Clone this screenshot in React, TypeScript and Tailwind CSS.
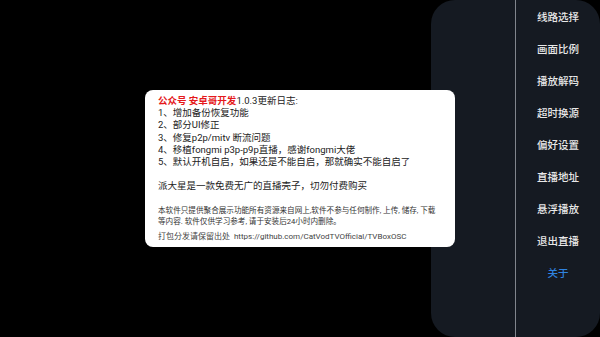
import React from "react";

const menu = ["线路选择", "画面比例", "播放解码", "超时换源", "偏好设置", "直播地址", "悬浮播放", "退出直播", "关于"];

const changes = [
  "1、增加备份恢复功能",
  "2、部分UI修正",
  "3、修复p2p/mitv 断流问题",
  "4、移植fongmi p3p-p9p直播，感谢fongmi大佬",
  "5、默认开机自启，如果还是不能自启，那就确实不能自启了",
];

export default function App() {
  return (
    <div
      className="relative w-[600px] h-[337px] bg-black overflow-hidden flex justify-end"
      style={{ fontFamily: 'Roboto, "Noto Sans CJK SC", sans-serif' }}
    >
      <div className="w-[169px] h-full bg-[#151a22] rounded-[24px] flex">
        <div className="w-[85px] h-full border-r border-[#80858d]" />
        <div className="flex-1 flex flex-col pt-[2px]">
          {menu.map((m) => (
            <div
              key={m}
              className={`h-8 flex items-center justify-center text-[10.5px] font-medium ${
                m === "关于" ? "text-[#2f83e0]" : "text-[#e8e8e8]"
              }`}
            >
              {m}
            </div>
          ))}
        </div>
      </div>

      <div className="absolute left-[145px] top-[90px] w-[310px] h-[157px] bg-white rounded-[8px] px-[13px] pt-[5px] text-[#222]">
        <div className="text-[9.5px] leading-[12.2px]">
          <p>
            <span className="text-[#e5191c] font-bold">公众号 安卓哥开发</span>
            1.0.3更新日志:
          </p>
          {changes.map((c) => (
            <p key={c}>{c}</p>
          ))}
          <p className="mt-[12px]">派大星是一款免费无广的直播壳子，切勿付费购买</p>
        </div>
        <p className="mt-[13px] text-[7.6px] leading-[11px] text-[#333]">
          本软件只提供聚合展示功能所有资源来自网上,软件不参与任何制作, 上传, 储存, 下载等内容. 软件仅供学习参考, 请于安装后24小时内删除。
        </p>
        <p className="mt-[4px] text-[8px] leading-[11px] text-[#444]">
          打包分发请保留出处&nbsp;&nbsp;https://github.com/CatVodTVOfficial/TVBoxOSC
        </p>
      </div>
    </div>
  );
}
